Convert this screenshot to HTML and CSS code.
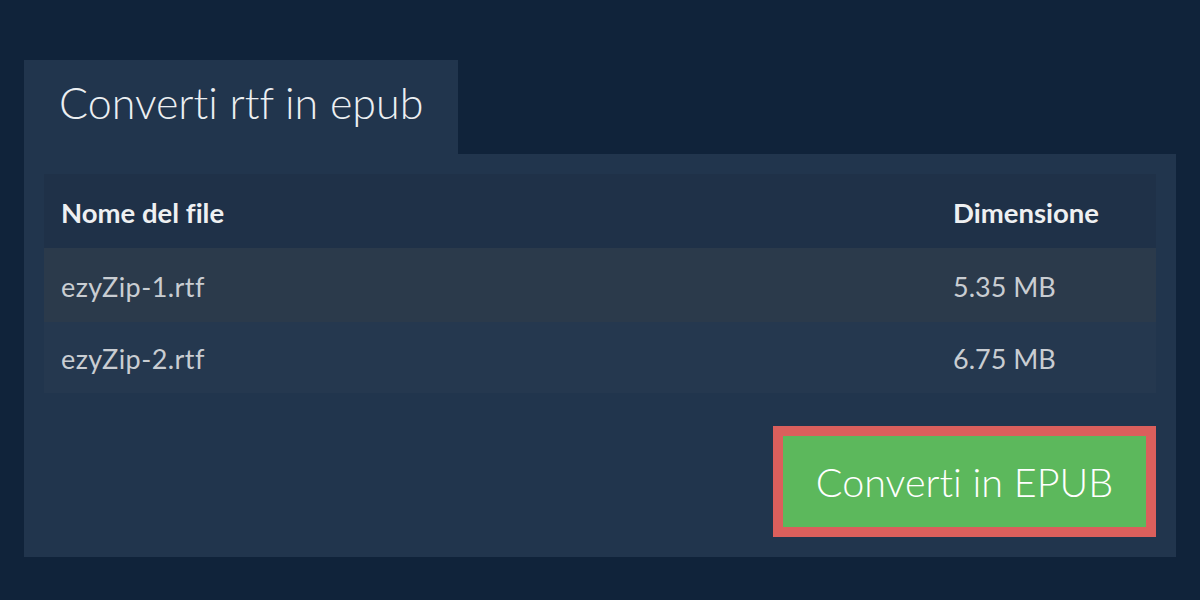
FILE: index.html
```html
<!DOCTYPE html>
<html lang="it">
<head>
<meta charset="utf-8">
<title>Converti rtf in epub</title>
<link rel="stylesheet" href="styles.css">
</head>
<body>
<div class="wrap">
  <div class="tab">Converti rtf in epub</div>
  <div class="panel">
    <div class="table">
      <div class="row head">
        <div class="cell">Nome del file</div>
        <div class="cell size">Dimensione</div>
      </div>
      <div class="row odd">
        <div class="cell name">ezyZip-1.rtf</div>
        <div class="cell size">5.35 MB</div>
      </div>
      <div class="row even">
        <div class="cell name">ezyZip-2.rtf</div>
        <div class="cell size">6.75 MB</div>
      </div>
    </div>
    <div class="actions">
      <div class="btn-frame"><button class="btn">Converti in EPUB</button></div>
    </div>
  </div>
</div>
</body>
</html>
```

FILE: styles.css
```css
html, body {
  margin: 0;
  padding: 0;
  background: #10233a;
  font-family: Lato, "Liberation Sans", sans-serif;
  font-variant-ligatures: none;
  height: 100%;
}
.wrap {
  padding: 60px 24px 0 24px;
}
.tab {
  display: inline-block;
  box-sizing: border-box;
  background: #21354d;
  color: #eceff2;
  font-weight: 300;
  font-size: 43px;
  line-height: 86px;
  height: 94px;
  padding: 0 0 8px 35px;
  width: 434px;
  white-space: nowrap;
  vertical-align: top;
}
.panel {
  background: #21354d;
  padding: 20px;
  height: 363px;
}
.table {
  display: flex;
  flex-direction: column;
}
.row {
  display: grid;
  grid-template-columns: 1fr 203px;
  padding-left: 17px;
  align-items: center;
  font-size: 27px;
}
.head {
  background: #1f3148;
  height: 74px;
  color: #eef0f2;
  font-weight: 700;
  font-size: 27.5px;
}
.odd {
  background: #2b3a4b;
  height: 74px;
  color: #c9cdd2;
}
.even {
  background: #25384f;
  height: 71px;
  color: #c9cdd2;
}
.cell { padding-top: 2px; white-space: nowrap; }
.cell.name { letter-spacing: 0.45px; }
.actions {
  display: flex;
  justify-content: flex-end;
  margin-top: 33px;
}
.btn-frame {
  background: #db5f5c;
  padding: 10px;
}
.btn {
  display: block;
  background: #5cb85c;
  border: none;
  color: #ffffff;
  font-family: Lato, "Liberation Sans", sans-serif;
  font-variant-ligatures: none;
  font-weight: 300;
  font-size: 39.5px;
  width: 363px;
  height: 91px;
  padding: 0;
  margin: 0;
}
```
